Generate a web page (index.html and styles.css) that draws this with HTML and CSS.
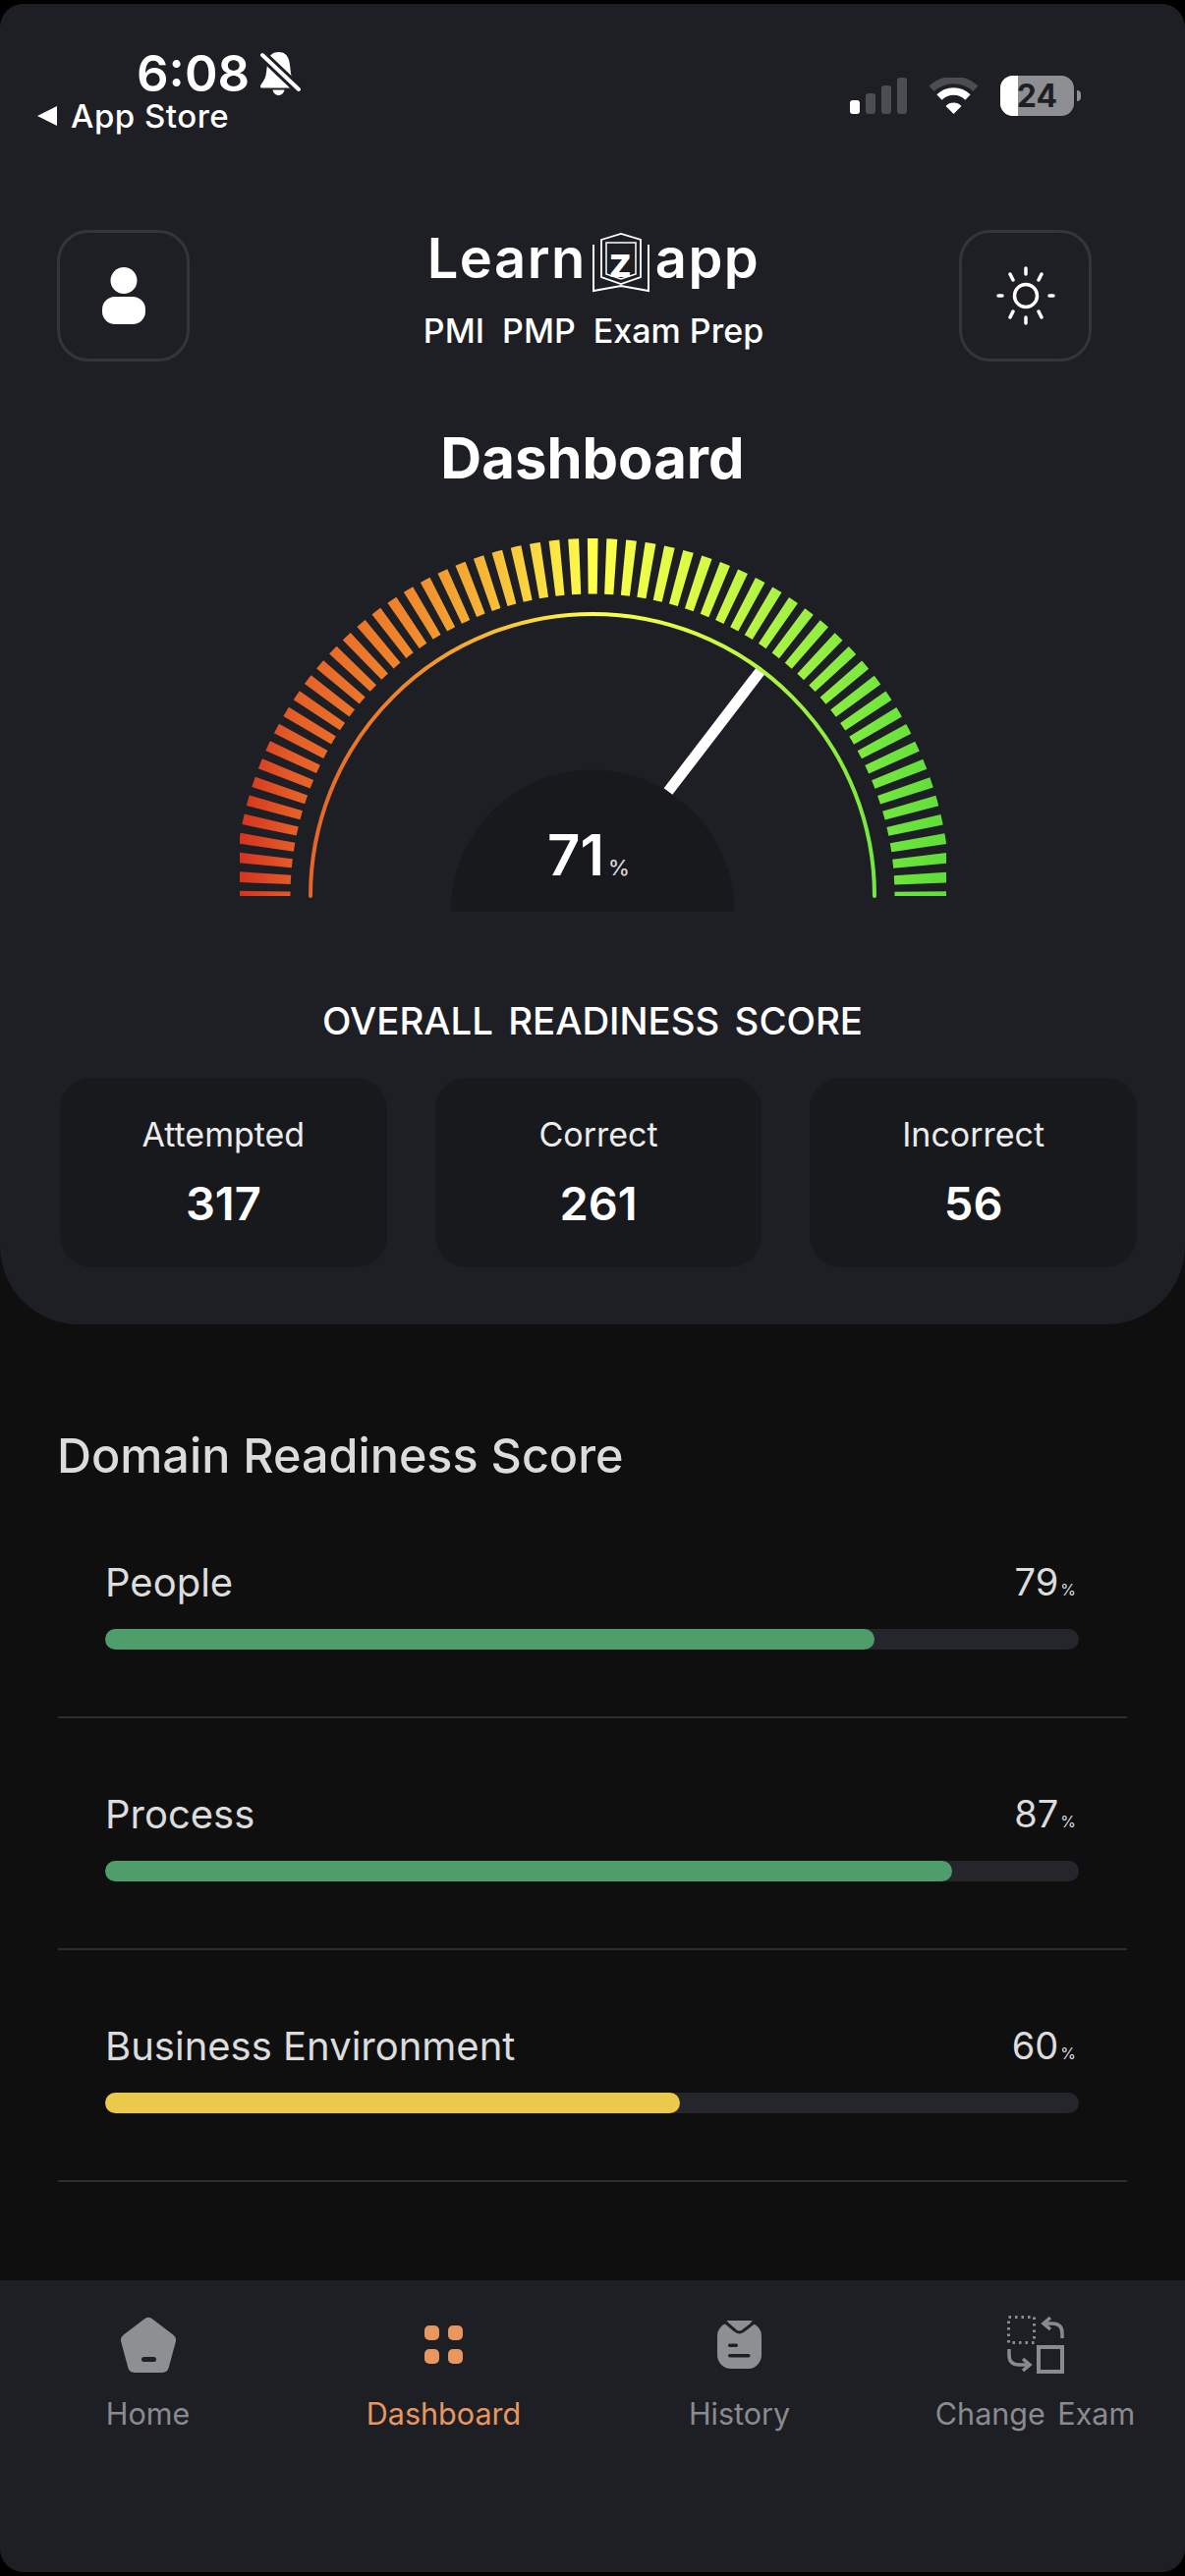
FILE: index.html
```html
<!DOCTYPE html>
<html>
<head>
  <title>LearnZapp Dashboard</title>
  <link rel="stylesheet" href="styles.css">
</head>
<body>
  <div class="screen">
    <div class="panel">
      <div class="status">
        <div class="status-left">
          <div class="time-row">
            <span class="time">6:08</span>
            <svg class="bell" viewBox="0 0 41 44" width="41" height="44">
              <path d="M18.500 0c6 0 9 3 10.500 8 1.500 5 1.500 12 2.500 16 .8 3.500 3.500 7 5.500 10 .6 1.200 0 2.500-1.500 2.500H1.500C0 36.500-.6 35.200 0 34c2-3 4.700-6.500 5.500-10 1-4 1-11 2.500-16C9.500 3 12.500 0 18.500 0z" fill="#fff"/>
              <path d="M12.500 38.500h12c-.6 3-3 5.500-6 5.500s-5.400-2.500-6-5.500z" fill="#fff"/>
              <path d="M2 3L40 39" stroke="#1e1f25" stroke-width="10"/>
              <path d="M2 3L39 38" stroke="#fff" stroke-width="4" stroke-linecap="round"/>
            </svg>
          </div>
          <div class="back-row">
            <span class="back-arrow"></span>
            <span class="back-label">App Store</span>
          </div>
        </div>
        <div class="status-right">
          <div class="signal">
            <span class="bar-s on"></span>
            <span class="bar-s b2"></span>
            <span class="bar-s b3"></span>
            <span class="bar-s b4"></span>
          </div>
          <svg class="wifi" viewBox="0 0 51 37" width="51" height="37">
            <path d="M3.100 11.300a33 33 0 0 1 44.800 0" fill="none" stroke="#4c4d51" stroke-width="7.500"/>
            <path d="M11 20a20.500 20.500 0 0 1 29 0" fill="none" stroke="#fff" stroke-width="7.500"/>
            <path d="M25.500 37L17.500 29a11 11 0 0 1 16 0z" fill="#fff"/>
          </svg>
          <div class="battery">
            <span class="battery-body"><span class="battery-fill"></span><span class="battery-num">24</span></span>
            <span class="battery-nub"></span>
          </div>
        </div>
      </div>

      <div class="header">
        <div class="icon-btn">
          <svg viewBox="0 0 44 58" width="44" height="58">
            <ellipse cx="22" cy="13.500" rx="13.500" ry="13.500" fill="#fff"/>
            <rect x="0" y="30" width="44" height="28" rx="13" fill="#fff"/>
          </svg>
        </div>
        <div class="brand">
          <div class="logo">
            <span>Learn</span>
            <svg class="logo-mark" viewBox="0 0 58 62" width="58" height="62">
              <path d="M9 8L29 2l20 6v38L29 53 9 46z" fill="none" stroke="#fff" stroke-width="1.800"/>
              <path d="M14 11h30v32L29 48 14 43z" fill="none" stroke="#fff" stroke-width="1.500"/>
              <path d="M1 13v47l28-5 28 5V13" fill="none" stroke="#fff" stroke-width="2"/>
              <text x="29" y="46" text-anchor="middle" class="logo-z">z</text>
            </svg>
            <span>app</span>
          </div>
          <div class="exam-name">PMI  PMP  Exam Prep</div>
        </div>
        <div class="icon-btn right">
          <svg viewBox="0 0 60 60" width="60" height="60" fill="none" stroke="#fff" stroke-width="3.500" stroke-linecap="round">
            <circle cx="30" cy="30" r="11.500"/>
            <path d="M30 2v6M30 52v6M2 30h4M54 30h4M14 8l3 6M43 46l3 6M46 8l-3 6M17 46l-3 6"/>
          </svg>
        </div>
      </div>

      <h1 class="title">Dashboard</h1>

      <svg class="gauge" viewBox="223 540 760 400" width="760" height="400">
        <defs>
          <linearGradient id="gaugeGrad" gradientUnits="userSpaceOnUse" x1="244" y1="0" x2="963" y2="0">
            <stop offset="0" stop-color="#d5331f"/>
            <stop offset="0.08" stop-color="#e55f28"/>
            <stop offset="0.24" stop-color="#f0882c"/>
            <stop offset="0.34" stop-color="#f6b335"/>
            <stop offset="0.5" stop-color="#ffff4a"/>
            <stop offset="0.65" stop-color="#d8fb45"/>
            <stop offset="0.77" stop-color="#a5f243"/>
            <stop offset="0.91" stop-color="#72e63e"/>
            <stop offset="1" stop-color="#5fdd38"/>
          </linearGradient>
          <clipPath id="tickClip"><rect x="244" y="540" width="719" height="371"/></clipPath>
        </defs>
        <g clip-path="url(#tickClip)">
          <path d="M267.250 911A335.750 335.750 0 0 1 938.750 911" fill="none" stroke="url(#gaugeGrad)" stroke-width="56.500" stroke-dasharray="10 8.186" stroke-dashoffset="5"/>
        </g>
        <path d="M316 911A287 287 0 0 1 890 911" fill="none" stroke="url(#gaugeGrad)" stroke-width="4" stroke-linecap="round"/>
        <path d="M458.500 927A144.500 144.500 0 0 1 747.500 927z" fill="#18191d"/>
        <path d="M773.500 682.500L680 804.500" stroke="#fff" stroke-width="11"/>
        <text x="586" y="890" text-anchor="middle" class="gauge-num">71</text>
        <text x="630" y="890" text-anchor="middle" class="gauge-pct">%</text>
      </svg>

      <div class="score-label">OVERALL READINESS SCORE</div>

      <div class="stats">
        <div class="stat"><div class="stat-name">Attempted</div><div class="stat-val">317</div></div>
        <div class="stat"><div class="stat-name">Correct</div><div class="stat-val">261</div></div>
        <div class="stat"><div class="stat-name">Incorrect</div><div class="stat-val">56</div></div>
      </div>
    </div>

    <div class="domains">
      <h2>Domain Readiness Score</h2>
      <div class="domain">
        <div class="domain-top"><span>People</span><span class="domain-val">79<small>%</small></span></div>
        <div class="track"><div class="fill green" style="width:79%"></div></div>
      </div>
      <div class="domain">
        <div class="domain-top"><span>Process</span><span class="domain-val">87<small>%</small></span></div>
        <div class="track"><div class="fill green" style="width:87%"></div></div>
      </div>
      <div class="domain">
        <div class="domain-top"><span>Business Environment</span><span class="domain-val">60<small>%</small></span></div>
        <div class="track"><div class="fill yellow" style="width:59%"></div></div>
      </div>
    </div>

    <div class="tabs">
      <div class="tab">
        <div class="tab-icon">
          <svg viewBox="0 0 58 57" width="58" height="57">
            <path d="M29 8L50 24 43 50H15L8 24z" fill="#8e8f93" stroke="#8e8f93" stroke-width="14" stroke-linejoin="round"/>
            <rect x="22" y="41" width="15" height="5" rx="2.500" fill="#1e1f25"/>
          </svg>
        </div>
        <div class="tab-label">Home</div>
      </div>
      <div class="tab active">
        <div class="tab-icon">
          <div class="dots"><span></span><span></span><span></span><span></span></div>
        </div>
        <div class="tab-label">Dashboard</div>
      </div>
      <div class="tab">
        <div class="tab-icon">
          <svg viewBox="0 0 45 49" width="45" height="49">
            <rect x="0" y="2" width="45" height="47" rx="14" fill="#8e8f93"/>
            <path d="M9 0h27l-13 12z" fill="#8e8f93"/>
            <path d="M8 1.500L18 10c3 2.700 6 2.700 9 0L38 1.500" fill="none" stroke="#1e1f25" stroke-width="3"/>
            <rect x="11" y="23.500" width="10" height="3.500" rx="1.700" fill="#1e1f25"/>
            <rect x="11" y="34" width="22.500" height="3.500" rx="1.700" fill="#1e1f25"/>
          </svg>
        </div>
        <div class="tab-label">History</div>
      </div>
      <div class="tab">
        <div class="tab-icon">
          <svg viewBox="0 0 58 59" width="58" height="59" fill="none" stroke="#8a8b8f">
            <rect x="1.500" y="1.500" width="26" height="26" stroke-width="3" stroke-dasharray="2.500 4"/>
            <rect x="32" y="32" width="24" height="25" stroke-width="4"/>
            <path d="M56 23v-5c0-7-4-10-10-10H38" stroke-width="3.500"/>
            <path d="M44 2l-7 6 7 6" stroke-width="3.500"/>
            <path d="M2 34v6c0 7 4 10 10 10h8" stroke-width="3.500"/>
            <path d="M16 44l7 6-7 6" stroke-width="3.500"/>
          </svg>
        </div>
        <div class="tab-label wide">Change Exam</div>
      </div>
    </div>
  </div>
</body>
</html>
```

FILE: styles.css
```css
* { box-sizing: border-box; }
body {
  margin: 0;
  background: #000;
  font-family: Inter, 'Noto Sans', sans-serif;
  color: #fff;
}
.screen {
  margin-top: 4px;
  height: 2614px;
  border-radius: 24px;
  overflow: hidden;
  background: #0f0f10;
  display: flex;
  flex-direction: column;
}

/* top panel */
.panel {
  background: #1e1f25;
  height: 1344px;
  border-radius: 0 0 80px 80px;
}
.status {
  height: 230px;
  padding-top: 46px;
  display: flex;
  justify-content: space-between;
  align-items: flex-start;
}
.status-left { padding-left: 38px; }
.time-row {
  display: flex;
  align-items: center;
  gap: 11px;
  padding-left: 101px;
  height: 50px;
}
.time { font-size: 51px; font-weight: 600; line-height: 50px; }
.back-row {
  display: flex;
  align-items: center;
  gap: 14px;
  height: 36px;
}
.back-arrow {
  width: 0;
  height: 0;
  border-top: 10px solid transparent;
  border-bottom: 10px solid transparent;
  border-right: 20px solid #fff;
}
.back-label { font-size: 33px; font-weight: 500; line-height: 36px; letter-spacing: 0.5px; }
.status-right {
  display: flex;
  align-items: flex-end;
  padding: 27px 106px 0 0;
}
.signal { display: flex; align-items: flex-end; gap: 6px; height: 37px; margin-right: 22px; }
.bar-s { width: 10px; border-radius: 3px; background: #4c4d51; height: 14px; }
.bar-s.on { background: #fff; }
.bar-s.b2 { height: 21px; }
.bar-s.b3 { height: 29px; }
.bar-s.b4 { height: 37px; }
.wifi { margin-right: 22px; }
.battery { display: flex; align-items: center; margin-bottom: -2px; }
.battery-body {
  position: relative;
  width: 75px;
  height: 41px;
  border-radius: 13px;
  background: #8e8f93;
  overflow: hidden;
  display: block;
}
.battery-fill {
  position: absolute;
  left: 0;
  top: 0;
  bottom: 0;
  width: 18px;
  background: #fff;
}
.battery-num {
  position: absolute;
  left: 0;
  right: 0;
  top: 0;
  text-align: center;
  line-height: 41px;
  font-size: 32px;
  font-weight: 700;
  color: #1e1f25;
}
.battery-nub {
  width: 4px;
  height: 11px;
  margin-left: 3px;
  background: #8e8f93;
  border-radius: 0 4px 4px 0;
}

.header {
  display: grid;
  grid-template-columns: 1fr auto 1fr;
  padding: 0 95px 0 58px;
  height: 134px;
}
.icon-btn {
  width: 135px;
  height: 134px;
  border: 3px solid #34353b;
  border-radius: 32px;
  display: flex;
  align-items: center;
  justify-content: center;
}
.icon-btn.right { justify-self: end; }
.brand { text-align: center; margin-left: 39px; }
.logo {
  display: flex;
  align-items: center;
  justify-content: center;
  gap: 6px;
  height: 62px;
  margin-top: 2px;
  font-size: 56px;
  font-weight: 600;
  letter-spacing: 1.5px;
}
.logo span { align-self: flex-start; line-height: 54px; }
.logo-z { font-size: 42px; font-weight: 700; fill: #fff; }
.exam-name {
  margin-top: 19px;
  font-size: 34px;
  font-weight: 500;
  line-height: 40px;
  white-space: pre;
}

.title {
  margin: 66px 0 0;
  height: 64px;
  font-size: 58px;
  font-weight: 700;
  line-height: 64px;
  text-align: center;
}

.gauge { display: block; margin: 43px auto 0; }
.gauge-num { font-size: 58px; font-weight: 600; fill: #fff; }
.gauge-pct { font-size: 22px; font-weight: 500; fill: #d8d8d8; }

.score-label {
  margin-top: 73px;
  height: 50px;
  font-size: 38.4px;
  font-weight: 500;
  line-height: 50px;
  word-spacing: 5px;
  text-align: center;
}

.stats {
  display: grid;
  grid-template-columns: repeat(3, 1fr);
  gap: 49px;
  margin-top: 33px;
  padding: 0 49px 0 61px;
}
.stat {
  height: 193px;
  background: #18191d;
  border-radius: 32px;
  text-align: center;
  padding-top: 35px;
}
.stat-name { font-size: 34px; line-height: 46px; color: #ececec; }
.stat-val { margin-top: 18px; font-size: 47px; font-weight: 600; line-height: 58px; }

/* domain scores */
.domains { padding: 0 59px; }
.domains h2 {
  margin: 103px 0 0 -1px;
  font-size: 48.5px;
  font-weight: 500;
  line-height: 62px;
  color: #dcdcdc;
}
.domain {
  height: 236px;
  padding: 72px 49px 0 48px;
  border-bottom: 2px solid #2c2d30;
}
.domain-top {
  display: flex;
  justify-content: space-between;
  align-items: center;
  height: 50px;
  font-size: 40px;
  color: #dcdcdc;
}
.domain-val { font-size: 38px; margin-right: 3px; }
.domain-val small { font-size: 16px; margin-left: 2px; }
.track {
  height: 21px;
  margin-top: 23px;
  border-radius: 11px;
  background: #25262b;
}
.fill { height: 100%; border-radius: 11px; }
.fill.green { background: #4f9d6b; }
.fill.yellow { background: #ecc94b; }

/* bottom tabs */
.tabs {
  margin-top: auto;
  height: 297px;
  background: #1e1f25;
  display: grid;
  grid-template-columns: repeat(4, 1fr);
  padding: 35px 2px 0 0;
}
.tab { text-align: center; color: #8a8b8f; }
.tab.active { color: #e9975f; }
.tab-icon {
  height: 60px;
  display: flex;
  align-items: center;
  justify-content: center;
}
.tab-label {
  margin-top: 19px;
  font-size: 30.5px;
  line-height: 44px;
}
.tab-label.wide { word-spacing: 4px; }
.dots {
  display: grid;
  grid-template-columns: 15px 15px;
  grid-auto-rows: 15px;
  gap: 9px;
}
.dots span { background: #e9975f; border-radius: 5px; }
```
